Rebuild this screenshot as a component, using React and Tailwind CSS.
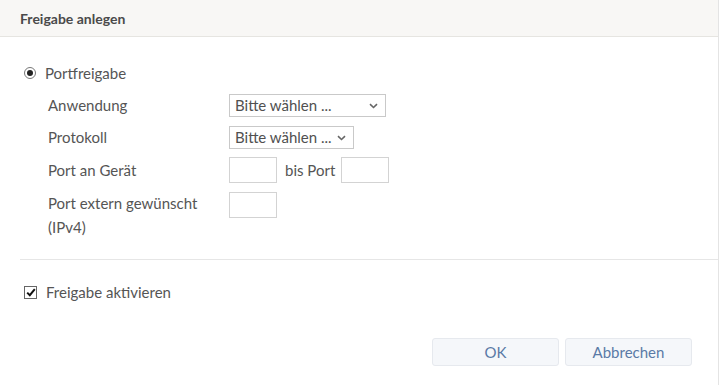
import React from "react";

function Chevron() {
  return (
    <svg width="9" height="6" viewBox="0 0 9 6" className="shrink-0">
      <path d="M1 1.2 L4.5 4.5 L8 1.2" fill="none" stroke="#666" strokeWidth="1.6" />
    </svg>
  );
}

function FakeSelect({ width }) {
  return (
    <div
      className={`flex h-[23px] items-center justify-between border border-[#c9c9c9] bg-white pl-[5px] pr-[7px] text-[15px] text-[#505050] ${width}`}
    >
      <span>Bitte wählen ...</span>
      <Chevron />
    </div>
  );
}

function Box() {
  return <div className="h-[26px] w-[48px] border border-[#d3d3d3] bg-white" />;
}

export default function App() {
  return (
    <div
      className="flex h-[385px] w-[719px] flex-col border-r border-[#e4e4e4] bg-white text-[#555]"
      style={{ fontFamily: "Lato, 'Noto Sans', sans-serif" }}
    >
      <div className="flex h-[37px] shrink-0 items-center border-b border-[#e6e5e1] bg-[#f8f7f5] px-5">
        <h1 className="text-[14px] font-bold text-[#4a4a4a]">Freigabe anlegen</h1>
      </div>

      <div className="pt-[25px]">
        <label className="flex h-[22px] items-center gap-[9px] pl-6">
          <span className="flex h-[12px] w-[12px] items-center justify-center rounded-full border border-[#777]">
            <span className="h-[6px] w-[6px] rounded-full bg-[#222]" />
          </span>
          <span className="text-[15px]">Portfreigabe</span>
        </label>

        <div className="mt-[10px] flex flex-col gap-[9px] pl-12">
          <div className="flex items-center">
            <span className="w-[181px] text-[15px]">Anwendung</span>
            <FakeSelect width="w-[157px]" />
          </div>
          <div className="flex items-center">
            <span className="w-[181px] text-[15px]">Protokoll</span>
            <FakeSelect width="w-[125px]" />
          </div>
          <div className="-mt-[1px] flex items-center">
            <span className="w-[181px] text-[15px]">Port an Gerät</span>
            <Box />
            <span className="ml-[8px] mr-[6px] text-[15px]">bis Port</span>
            <Box />
          </div>
          <div className="flex items-start">
            <span className="-mt-[1px] w-[181px] text-[15px] leading-[24px]">
              Port extern gewünscht
              <br />
              (IPv4)
            </span>
            <Box />
          </div>
        </div>

        <div className="ml-5 mt-[20px] border-t border-[#e6e6e6]" />

        <label className="mt-[21px] flex h-[22px] items-center gap-[9px] pl-6">
          <span className="flex h-[13px] w-[13px] items-center justify-center border border-[#666]">
            <svg width="10" height="9" viewBox="0 0 10 9">
              <path d="M1.2 4.6 L3.8 7.2 L8.8 1.2" fill="none" stroke="#111" strokeWidth="2" />
            </svg>
          </span>
          <span className="text-[15px]">Freigabe aktivieren</span>
        </label>
      </div>

      <div className="mt-auto mb-[19px] flex justify-end gap-[6px] pr-[26px]">
        <button className="h-[28px] w-[127px] rounded-[3px] border border-[#e6e9ee] bg-[#f5f7fa] text-[15px] text-[#5a7aa6]">
          OK
        </button>
        <button className="h-[28px] w-[127px] rounded-[3px] border border-[#e6e9ee] bg-[#f5f7fa] text-[15px] text-[#5a7aa6]">
          Abbrechen
        </button>
      </div>
    </div>
  );
}
